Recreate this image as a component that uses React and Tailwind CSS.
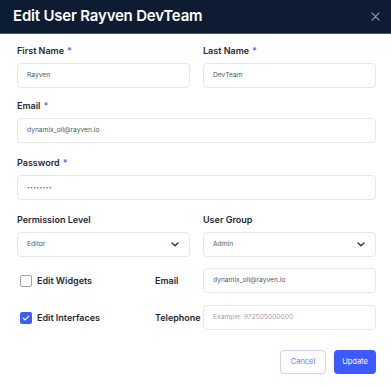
import React from "react";

const Label = ({ children, required }) => (
  <div className="text-[9px] leading-[13px] font-semibold text-[#1e293b] mb-[6px]">
    {children}
    {required && <span className="text-[#4f6ef7] ml-[3px]">*</span>}
  </div>
);

const Input = ({ value, placeholder, password }) => (
  <div className="h-[25px] border border-[#e5e7eb] rounded-[4px] flex items-center px-[9px] text-[6.7px] bg-white">
    {password ? (
      <span className="text-[#6b7280] text-[5px] tracking-[0.3px]">{value}</span>
    ) : value ? (
      <span className="text-[#525866]">{value}</span>
    ) : (
      <span className="text-[#9ca3af]">{placeholder}</span>
    )}
  </div>
);

const Select = ({ value }) => (
  <div className="h-[25px] border border-[#e5e7eb] rounded-[4px] flex items-center justify-between pl-[9px] pr-[10px] text-[6.7px] bg-white">
    <span className="text-[#525866]">{value}</span>
    <svg width="8" height="5" viewBox="0 0 8 5" fill="none">
      <path d="M1 1l3 2.8L7 1" stroke="#1f2937" strokeWidth="1.3" strokeLinecap="round" strokeLinejoin="round" />
    </svg>
  </div>
);

const Check = ({ checked }) =>
  checked ? (
    <div className="w-[12px] h-[12px] rounded-[2px] bg-[#3f5cf6] flex items-center justify-center">
      <svg width="8" height="6" viewBox="0 0 8 6" fill="none">
        <path d="M1.2 3.1l1.9 1.8 3.7-3.8" stroke="white" strokeWidth="1.1" strokeLinecap="round" strokeLinejoin="round" />
      </svg>
    </div>
  ) : (
    <div className="w-[12px] h-[12px] rounded-[2px] border border-[#9ca3af] bg-white" />
  );

export default function App() {
  return (
    <div className="w-[391px] h-[387px] bg-white font-['Inter',sans-serif] overflow-hidden">
      <div className="h-[34px] bg-[#0d1b33] border-b border-[#4b5a73] flex items-center justify-between pl-[13px] pr-[11px]">
        <span className="text-white text-[15px] font-semibold tracking-[-0.2px]">Edit User Rayven DevTeam</span>
        <svg width="9" height="9" viewBox="0 0 10 10" fill="none">
          <path d="M1 1l8 8M9 1l-8 8" stroke="#9aa3b2" strokeWidth="1.2" strokeLinecap="round" />
        </svg>
      </div>

      <div className="pl-[17px] pr-[15px] pt-[10px]">
        <div className="grid grid-cols-2 gap-x-[13px]">
          <div>
            <Label required>First Name</Label>
            <Input value="Rayven" />
          </div>
          <div>
            <Label required>Last Name</Label>
            <Input value="DevTeam" />
          </div>
        </div>

        <div className="mt-[11px]">
          <Label required>Email</Label>
          <Input value="dynamix_oil@rayven.io" />
        </div>

        <div className="mt-[13px]">
          <Label required>Password</Label>
          <Input password value="••••••••" />
        </div>

        <div className="grid grid-cols-2 gap-x-[13px] mt-[13px]">
          <div>
            <Label>Permission Level</Label>
            <Select value="Editor" />
          </div>
          <div>
            <Label>User Group</Label>
            <Select value="Admin" />
          </div>
        </div>

        <div className="flex items-center mt-[11px]">
          <div className="w-[138px] flex items-center pl-[3px] gap-[5px]">
            <Check />
            <span className="text-[9px] font-semibold text-[#1e293b]">Edit Widgets</span>
          </div>
          <span className="w-[48px] text-[9px] font-semibold text-[#1e293b]">Email</span>
          <div className="flex-1">
            <Input value="dynamix_oil@rayven.io" />
          </div>
        </div>

        <div className="flex items-center mt-[12px]">
          <div className="w-[138px] flex items-center pl-[3px] gap-[5px]">
            <Check checked />
            <span className="text-[9px] font-semibold text-[#1e293b]">Edit Interfaces</span>
          </div>
          <span className="w-[48px] text-[9px] font-semibold text-[#1e293b] whitespace-nowrap">Telephone</span>
          <div className="flex-1">
            <Input placeholder="Example: 972505000000" />
          </div>
        </div>

        <div className="flex justify-end gap-[8px] mt-[20px]">
          <button className="w-[46px] h-[24px] rounded-[4px] border border-[#c7d2fe] text-[#6b7ff5] text-[7.5px] bg-white">
            Cancel
          </button>
          <button className="w-[42px] h-[24px] rounded-[4px] bg-[#3d5afe] text-white text-[7.5px]">
            Update
          </button>
        </div>
      </div>
    </div>
  );
}
